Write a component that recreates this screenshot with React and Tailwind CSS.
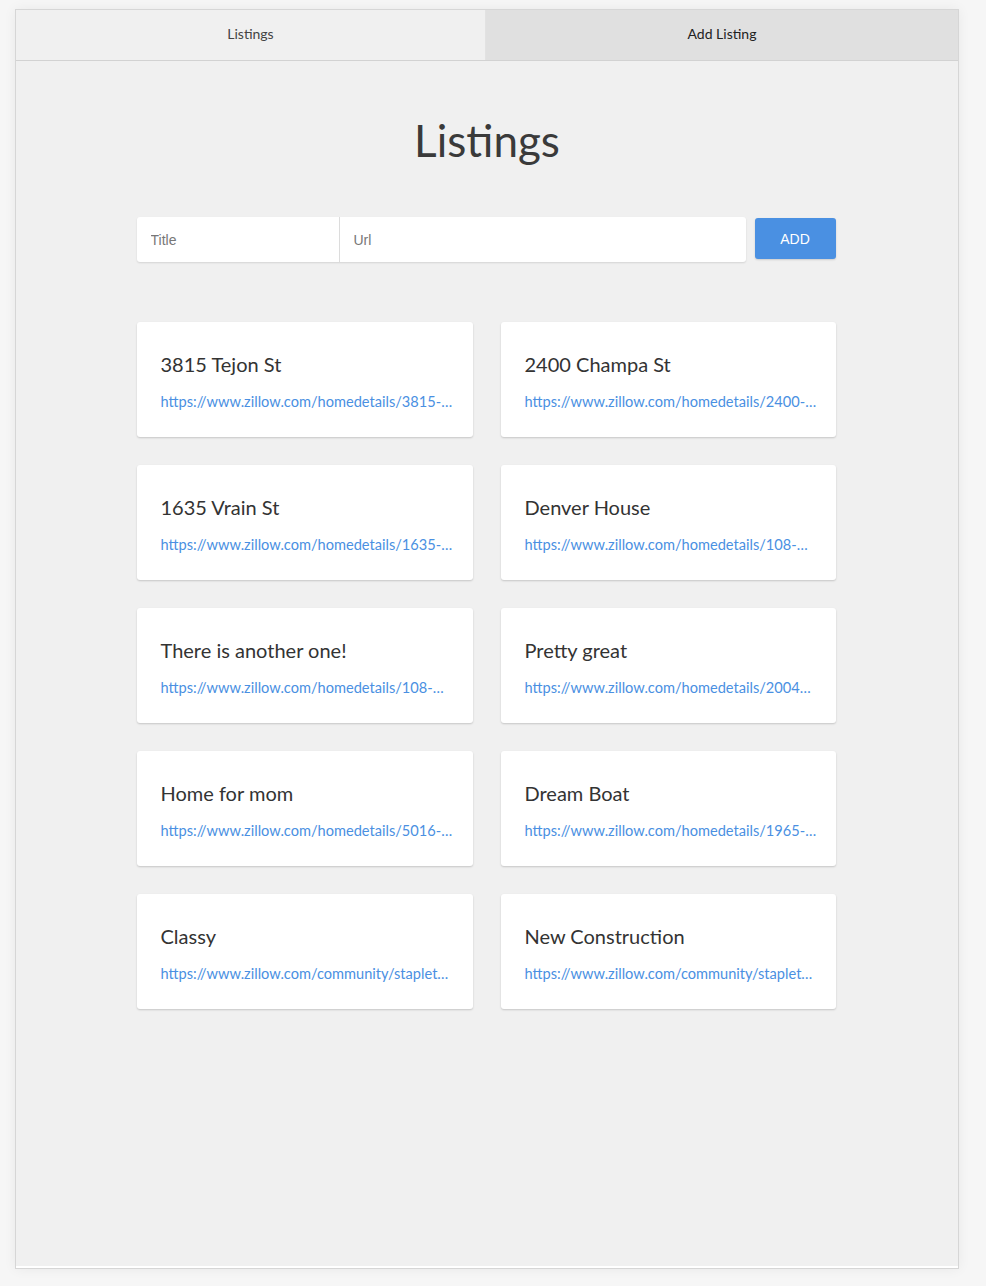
import React from 'react';

// link text is shown exactly as truncated in the list view
const listings = [
  { title: '3815 Tejon St', url: 'https://www.zillow.com/homedetails/3815-…' },
  { title: '2400 Champa St', url: 'https://www.zillow.com/homedetails/2400-…' },
  { title: '1635 Vrain St', url: 'https://www.zillow.com/homedetails/1635-…' },
  { title: 'Denver House', url: 'https://www.zillow.com/homedetails/108-…' },
  { title: 'There is another one!', url: 'https://www.zillow.com/homedetails/108-…' },
  { title: 'Pretty great', url: 'https://www.zillow.com/homedetails/2004…' },
  { title: 'Home for mom', url: 'https://www.zillow.com/homedetails/5016-…' },
  { title: 'Dream Boat', url: 'https://www.zillow.com/homedetails/1965-…' },
  { title: 'Classy', url: 'https://www.zillow.com/community/staplet…' },
  { title: 'New Construction', url: 'https://www.zillow.com/community/staplet…' },
];

export default function App() {
  return (
    <div className="min-h-[1286px] bg-[#f6f6f6] pt-[9px] pl-[15px] font-['Lato','Open_Sans',sans-serif]">
      <div className="w-[944px] h-[1260px] flex flex-col bg-[#f0f0f0] border border-[#d6d6d6] shadow-[0_0_12px_rgba(0,0,0,0.06)]">
        {/* Tabs */}
        <div className="grid grid-cols-[470px_1fr] h-[51px] border-b border-[#d2d2d2] text-[14px]">
          <button className="bg-[#f0f0f0] text-[#444] border-r border-[#e2e2e2] pb-[3px]">Listings</button>
          <button className="bg-[#e0e0e0] text-[#222] pb-[3px]">Add Listing</button>
        </div>

        <div className="flex-1 flex flex-col items-center">
          <h1 className="mt-[53px] text-[44px] leading-[53px] text-[#3a3a3a]">Listings</h1>

          {/* Add form */}
          <div className="mt-[50px] w-[699px] flex items-start gap-[9px] -translate-x-px">
            <div className="flex h-[45px] w-[609px] bg-white rounded-[3px] shadow-[0_1px_2px_rgba(0,0,0,0.12)] font-['Liberation_Sans',Arial,sans-serif] text-[14px]">
              <input
                placeholder="Title"
                className="w-[203px] px-[14px] pt-[2px] bg-transparent border-r border-[#dcdcdc] outline-none placeholder:text-[#777]"
              />
              <input
                placeholder="Url"
                className="flex-1 px-[14px] pt-[2px] bg-transparent outline-none placeholder:text-[#777]"
              />
            </div>
            <button className="mt-px w-[81px] h-[41px] pt-[2px] rounded-[3px] bg-[#4a90e2] text-white text-[14px] font-['Liberation_Sans',Arial,sans-serif] shadow-[0_1px_2px_rgba(0,0,0,0.15)]">
              ADD
            </button>
          </div>

          {/* Cards */}
          <div className="mt-[60px] w-[699px] grid grid-cols-[336px_335px] gap-[28px] -translate-x-px">
            {listings.map((l) => (
              <div
                key={l.title}
                className="h-[115px] bg-white rounded-[3px] shadow-[0_1px_2px_rgba(0,0,0,0.18)] pt-[30px] px-[24px]"
              >
                <div className="text-[20px] leading-[24px] text-[#333]">{l.title}</div>
                <a href="#" className="mt-[16px] block text-[14.6px] leading-[20px] text-[#4a90e2] whitespace-nowrap">
                  {l.url}
                </a>
              </div>
            ))}
          </div>
        </div>

        <div className="h-[2px] bg-white" />
      </div>
    </div>
  );
}
